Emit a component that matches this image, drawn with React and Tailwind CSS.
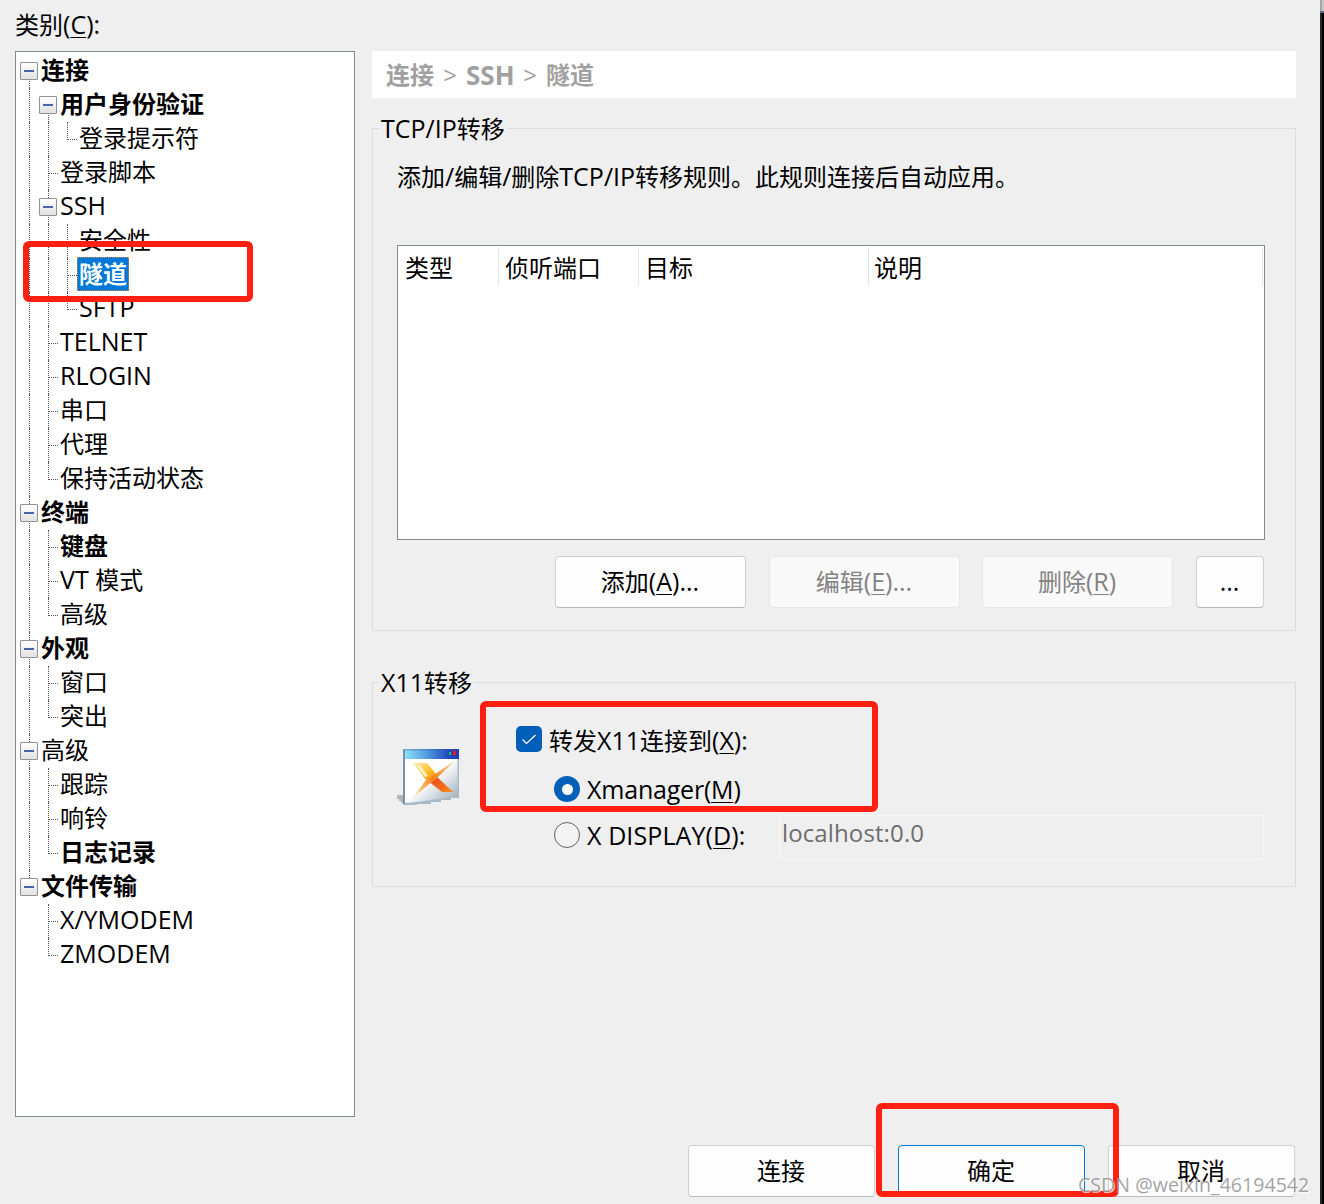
import clsx from "clsx";

// one character per indent column:
// "|" line, "T" branch, "L" last branch, " " empty
// "F" first box, "B" box with line both sides, "E" last box
const treeRows = [
	{ guides: "F", label: "连接", bold: true },
	{ guides: "|F", label: "用户身份验证", bold: true },
	{ guides: "||L", label: "登录提示符" },
	{ guides: "|T", label: "登录脚本" },
	{ guides: "|B", label: "SSH" },
	{ guides: "||T", label: "安全性" },
	{ guides: "||T", label: "隧道", bold: true, selected: true },
	{ guides: "||L", label: "SFTP" },
	{ guides: "|T", label: "TELNET" },
	{ guides: "|T", label: "RLOGIN" },
	{ guides: "|T", label: "串口" },
	{ guides: "|T", label: "代理" },
	{ guides: "|L", label: "保持活动状态" },
	{ guides: "B", label: "终端", bold: true },
	{ guides: "|T", label: "键盘", bold: true },
	{ guides: "|T", label: "VT 模式" },
	{ guides: "|L", label: "高级" },
	{ guides: "B", label: "外观", bold: true },
	{ guides: "|T", label: "窗口" },
	{ guides: "|L", label: "突出" },
	{ guides: "B", label: "高级" },
	{ guides: "|T", label: "跟踪" },
	{ guides: "|T", label: "响铃" },
	{ guides: "|L", label: "日志记录", bold: true },
	{ guides: "E", label: "文件传输", bold: true },
	{ guides: " T", label: "X/YMODEM" },
	{ guides: " L", label: "ZMODEM" },
];

const columns = [
	{ title: "类型", className: "w-[101px] pl-[7px]" },
	{ title: "侦听端口", className: "w-[140px] pl-[6px]" },
	{ title: "目标", className: "w-[230px] pl-[6px]" },
	{ title: "说明", className: "w-[394px] pl-[5px]" },
];

// latin runs are set a little larger than the chinese ones,
// "&X" marks the underlined access key
function Label({ text }) {
	return text
		.split(/(&\w|[^&\u2e80-\uffff]+)/)
		.filter(Boolean)
		.map((part, i) => {
			if (part.startsWith("&")) {
				return (
					<span key={i} className="text-[25px] leading-none underline decoration-1 underline-offset-[3px]">
						{part.slice(1)}
					</span>
				);
			}
			const latin = part.charCodeAt(0) < 0x2e80;
			return (
				<span key={i} className={clsx("whitespace-pre", latin && "text-[25px] leading-none")}>
					{part}
				</span>
			);
		});
}

function Guide({ type }) {
	const isBox = type === "F" || type === "B" || type === "E";
	return (
		<div className="relative flex h-[34px] w-[19px] shrink-0 pl-[9px]">
			{type !== " " && (
				<div
					className={clsx(
						"w-0 border-l border-dotted border-[#555]",
						type === "F" && "mt-[17px] h-[17px]",
						(type === "L" || type === "E") && "h-[18px]",
						(type === "|" || type === "T" || type === "B") && "h-[34px]"
					)}
				/>
			)}
			{(type === "T" || type === "L") && (
				<div className="mt-[17px] h-0 w-[9px] border-t border-dotted border-[#555]" />
			)}
			{isBox && (
				<div className="absolute top-2 left-0 flex size-[18px] items-center justify-center rounded-[1px] border border-[#919191] bg-linear-to-b from-white to-[#e2e2e2]">
					<div className="h-[2px] w-[10px] bg-[#4a63ad]" />
				</div>
			)}
		</div>
	);
}

function TreeRow({ row }) {
	return (
		<div className="flex h-[34px] items-center pl-1">
			{row.guides.split("").map((type, i) => (
				<Guide key={i} type={type} />
			))}
			<span
				className={clsx(
					"-mt-[2px] h-[34px] border border-dotted px-px leading-[32px] whitespace-nowrap",
					row.bold && "font-bold",
					row.selected ? "border-[#d98a3a] bg-[#0078d7] text-white" : "border-transparent"
				)}
			>
				<Label text={row.label} />
			</span>
		</div>
	);
}

function Button({ children, className, disabled, primary }) {
	return (
		<button
			disabled={disabled}
			className={clsx(
				"flex h-[52px] items-center justify-center rounded-[4px] border pr-px whitespace-nowrap",
				disabled && "border-[#e7e7e7] bg-[#f9f9f9] text-[#838383]",
				primary && "border-[#0078d4] bg-[#fdfdfd]",
				!disabled && !primary && "border-[#d0d0d0] border-b-[#b9b9b9] bg-[#fdfdfd]",
				className
			)}
		>
			<span>
				<Label text={children} />
			</span>
		</button>
	);
}

function GroupBox({ title, className, children }) {
	return (
		<section className={clsx("border border-[#dcdcdc]", className)}>
			<h2 className="-mt-[18px] ml-[6px] h-[34px] w-fit bg-[#efefef] px-[2px] leading-[36px]">
				<Label text={title} />
			</h2>
			{children}
		</section>
	);
}

function XmanagerIcon() {
	return (
		<svg className="h-[60px] w-[64px] shrink-0" viewBox="6 12 64 60">
			<defs>
				<linearGradient id="bar">
					<stop offset="0" stopColor="#8be0f5" />
					<stop offset="0.45" stopColor="#4a93dc" />
					<stop offset="0.8" stopColor="#2348bd" />
					<stop offset="1" stopColor="#2038b0" />
				</linearGradient>
				<linearGradient id="body" x1="0.2" y1="0.1" x2="1" y2="0.9">
					<stop offset="0.4" stopColor="#ffffff" />
					<stop offset="1" stopColor="#9fb0bd" />
				</linearGradient>
				<linearGradient id="gold" x1="0" y1="0" x2="1" y2="1">
					<stop offset="0" stopColor="#fff0b0" />
					<stop offset="0.6" stopColor="#fdbb24" />
					<stop offset="1" stopColor="#f08a18" />
				</linearGradient>
				<linearGradient id="fire" x1="0" y1="0" x2="1" y2="1">
					<stop offset="0" stopColor="#e63d1c" />
					<stop offset="1" stopColor="#fb8d17" />
				</linearGradient>
				<linearGradient id="streak" x1="1" y1="0" x2="0" y2="1">
					<stop offset="0" stopColor="#f6e4c8" />
					<stop offset="0.5" stopColor="#f38219" />
					<stop offset="1" stopColor="#fff0c4" />
				</linearGradient>
			</defs>
			<path d="M7 60H14V68H11V66H9V64H7z" fill="#b5b5b5" />
			<path d="M13 14H69V63H61V65H51V67H41V69H27V70H13z" fill="#a9bac6" />
			<path d="M15 24H67.500V61L55 63L41 65L27 67L15 68z" fill="url(#body)" />
			<path d="M13 14h2v55h-2z" fill="#7591ad" />
			<path d="M15 14H69V24H15z" fill="url(#bar)" />
			<path d="M15 14H69V15.500H15z" fill="#3559b0" opacity="0.35" />
			<path d="M59 17h2v3h-2z" fill="#18c55a" />
			<path d="M63 16h3v4h-3z" fill="#f01525" />
			<path d="M23 28H37L47 40L36 45z" fill="url(#gold)" />
			<path d="M26 30H30L38 41L35 42z" fill="#fff1bd" />
			<path d="M38 46L46 41L63 57H52z" fill="url(#fire)" />
			<path d="M66 25L46 44L38 50L23 63L35 46L45 39z" fill="url(#streak)" />
		</svg>
	);
}

function Tree() {
	return (
		<div className="h-[1066px] w-[340px] border border-[#828790] bg-white pt-[2px]">
			{treeRows.map((row, i) => (
				<TreeRow key={i} row={row} />
			))}
		</div>
	);
}

function RuleTable() {
	return (
		<div className="mt-[51px] ml-6 h-[295px] w-[868px] border border-[#828790] bg-white pt-px">
			<div className="flex h-[39px]">
				{columns.map((col) => (
					<div
						key={col.title}
						className={clsx("shrink-0 border-r border-[#e3e3e3] leading-[41px]", col.className)}
					>
						{col.title}
					</div>
				))}
			</div>
		</div>
	);
}

function X11Options() {
	return (
		<div className="flex">
			<div className="mt-[48px] ml-[23px]">
				<XmanagerIcon />
			</div>
			<div className="mt-[27px] ml-[56px]">
				<div className="flex h-[26px] items-center">
					<span className="flex size-[26px] items-center justify-center rounded-[5px] bg-[#005fb8]">
						<svg className="size-[16px]" viewBox="0 0 16 16" fill="none">
							<path d="M1.500 8.500L5.500 12.500L14.500 4" stroke="white" strokeWidth="1.200" />
						</svg>
					</span>
					<span className="mt-[3px] ml-[7px] whitespace-nowrap">
						<Label text="转发X11连接到(&X):" />
					</span>
				</div>
				<div className="mt-[24px] ml-[38px] flex h-[26px] items-center">
					<span className="flex size-[26px] items-center justify-center rounded-full bg-[#005fb8]">
						<span className="size-[11px] rounded-full bg-white" />
					</span>
					<span className="mt-[2px] ml-[7px] tracking-[-0.2px] whitespace-nowrap">
						<Label text="Xmanager(&M)" />
					</span>
				</div>
				<div className="mt-[20px] ml-[38px] flex h-[26px] items-center">
					<span className="size-[26px] rounded-full border border-[#626262] bg-[#f3f3f3]" />
					<span className="mt-[2px] ml-[7px] w-[192px] tracking-[0.1px] whitespace-nowrap">
						<Label text="X DISPLAY(&D):" />
					</span>
					<div className="mt-[4px] h-[45px] w-[485px] shrink-0 border border-[#f8f8f8] pl-[2px] leading-[34px] tracking-[0.12px] text-[#6d6d6d]">
						localhost:0.0
					</div>
				</div>
			</div>
		</div>
	);
}

// red rectangles drawn on top of the dialog
function Marks() {
	return (
		<>
			<div className="absolute top-[241px] left-[23px] h-[61px] w-[230px] rounded-[6px] border-6 border-[#ff2012]" />
			<div className="absolute top-[701px] left-[480px] h-[111px] w-[398px] rounded-[6px] border-6 border-[#ff2012]" />
			<div className="absolute top-[1103px] left-[876px] h-[94px] w-[243px] rounded-[6px] border-6 border-[#ff2012]" />
			<div className="absolute top-[1173px] left-[1078px] text-[19.600px] leading-6 whitespace-nowrap text-[#8c8c8c]/80 [text-shadow:1px_1px_0_rgba(255,255,255,0.7)]">
				CSDN @weixin_46194542
			</div>
		</>
	);
}

export default function App() {
	return (
		<div className="relative flex h-[1204px] w-[1324px] overflow-hidden bg-[#efefef] font-['Open_Sans','Noto_Sans_CJK_SC',sans-serif] text-[24px] leading-[34px] text-black">
			<aside className="ml-[15px] w-[340px] shrink-0 pt-[8px]">
				<div className="mb-[9px] h-[34px]">
					<Label text="类别(&C):" />
				</div>
				<Tree />
			</aside>

			<main className="ml-[17px] w-[924px] shrink-0 pt-[51px]">
				<div className="flex h-[47px] gap-2 bg-white pl-[14px] leading-[48px] font-bold text-[#a0a0a0]">
					<span>连接</span>
					<span className="w-4 text-center font-normal">&gt;</span>
					<span className="w-12 text-[26px]">SSH</span>
					<span className="w-4 text-center font-normal">&gt;</span>
					<span>隧道</span>
				</div>

				<GroupBox title="TCP/IP转移" className="mt-[30px] h-[503px]">
					<p className="mt-[15px] ml-6 h-[34px] whitespace-nowrap">
						<Label text="添加/编辑/删除TCP/IP转移规则。此规则连接后自动应用。" />
					</p>
					<RuleTable />
					<div className="mt-[16px] flex justify-end pr-[31px]">
						<Button className="w-[191px]">添加(&amp;A)...</Button>
						<Button className="ml-[23px] w-[191px]" disabled>
							编辑(&amp;E)...
						</Button>
						<Button className="ml-[22px] w-[191px]" disabled>
							删除(&amp;R)
						</Button>
						<Button className="ml-[23px] w-[68px]">...</Button>
					</div>
				</GroupBox>

				<GroupBox title="X11转移" className="mt-[51px] h-[205px]">
					<X11Options />
				</GroupBox>

				<div className="mt-[258px] flex justify-end gap-[23px] pr-px">
					<Button className="w-[187px]">连接</Button>
					<Button className="w-[187px]" primary>
						确定
					</Button>
					<Button className="w-[187px]">取消</Button>
				</div>
			</main>

			<div className="ml-auto flex w-1 flex-col">
				<div className="h-[11px] border-l-2 border-[#a6a6a6] bg-[#c8c8c8]" />
				<div className="h-[2px] bg-[#5f6b7b]" />
				<div className="flex-1 border-l-2 border-[#25282a] bg-black" />
			</div>

			<Marks />
		</div>
	);
}
